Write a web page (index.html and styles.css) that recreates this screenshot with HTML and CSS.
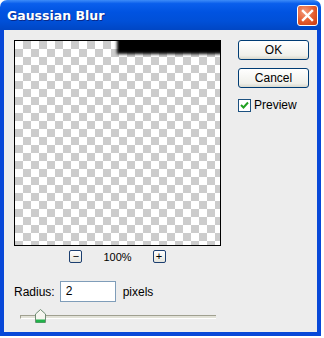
FILE: index.html
```html
<!DOCTYPE html>
<html lang="en">
<head>
    <meta charset="UTF-8">
    <title>Gaussian Blur</title>
    <link rel="stylesheet" href="styles.css">
</head>
<body>
    <div class="window">
        <div class="titlebar">
            <span class="title">Gaussian Blur</span>
            <button class="close" type="button">
                <svg width="13" height="13" viewBox="0 0 13 13">
                    <path d="M2 2 L11 11 M11 2 L2 11" stroke="#fff" stroke-width="2.4" stroke-linecap="square"/>
                </svg>
            </button>
        </div>
        <div class="content">
            <div class="main">
                <div class="left">
                    <div class="preview">
                        <div class="blob"></div>
                    </div>
                    <div class="zoom-row">
                        <span class="zoom-btn">&minus;</span>
                        <span class="zoom-value">100%</span>
                        <span class="zoom-btn">+</span>
                    </div>
                </div>
                <div class="right">
                    <button class="btn" type="button">OK</button>
                    <button class="btn" type="button">Cancel</button>
                    <label class="check">
                        <span class="box">
                            <svg width="9" height="9" viewBox="0 0 9 9">
                                <path d="M1 4 L3.5 6.5 L8 1.5" stroke="#21a121" stroke-width="2" fill="none"/>
                            </svg>
                        </span>
                        Preview
                    </label>
                </div>
            </div>
            <div class="radius-row">
                <span class="label">Radius:</span>
                <span class="input">2</span>
                <span>pixels</span>
            </div>
            <div class="slider">
                <div class="track"></div>
                <svg class="thumb" width="11" height="14" viewBox="0 0 11 14">
                    <path d="M0.5 5 L5.5 0.5 L10.5 5 L10.5 13.5 L0.5 13.5 Z" fill="#f6f6f0" stroke="#6f8c74"/>
                    <rect x="1" y="10.5" width="9" height="3" fill="#21b24a"/>
                </svg>
            </div>
        </div>
    </div>
</body>
</html>
```

FILE: styles.css
```css
body {
    margin: 0;
    background: #fff;
    font-family: "Liberation Sans", Arial, sans-serif;
    font-size: 12px;
    color: #000;
}
.window {
    width: 321px;
    height: 336px;
    display: flex;
    flex-direction: column;
}
.titlebar {
    height: 30px;
    border-radius: 7px 7px 0 0;
    background: linear-gradient(#3d8cf8 0%, #0a5fec 12%, #0053e1 40%, #0050d8 70%, #0046c4 100%);
    display: flex;
    align-items: center;
    justify-content: space-between;
    padding: 0 3px 0 7px;
}
.title {
    color: #fff;
    font-family: "DejaVu Sans", sans-serif;
    font-weight: bold;
    font-size: 12.5px;
    text-shadow: 1px 1px 0 #0a2a8a;
    margin-top: 1px;
}
.close {
    width: 21px;
    height: 21px;
    border: 1px solid #fff;
    border-radius: 3px;
    background: radial-gradient(circle at 35% 30%, #f49a7c, #e35a2c 55%, #c93a10);
    display: flex;
    align-items: center;
    justify-content: center;
    padding: 0;
    margin-top: 1px;
}
.content {
    flex: 1;
    background: #ededed;
    border: 4px solid #0848d8;
    border-top: none;
    padding: 10px 0 0 10px;
    display: flex;
    flex-direction: column;
}
.main {
    display: flex;
    gap: 17px;
}
.left {
    display: flex;
    flex-direction: column;
    align-items: center;
}
.preview {
    width: 205px;
    height: 204px;
    border: 1px solid #000;
    position: relative;
    overflow: hidden;
    background-color: #fff;
    background-image: conic-gradient(#cccccc 25%, #fff 0 50%, #cccccc 0 75%, #fff 0);
    background-size: 16px 16px;
}
.blob {
    position: absolute;
    left: 102px;
    top: -10px;
    width: 120px;
    height: 23px;
    background: #000;
    filter: blur(1.6px);
}
.zoom-row {
    display: flex;
    align-items: center;
    gap: 21px;
    margin-top: 4px;
    font-size: 11px;
}
.zoom-value {
    font-weight: normal;
}
.zoom-btn {
    width: 11px;
    height: 11px;
    border: 1px solid #1c3f70;
    border-radius: 2px;
    background: linear-gradient(#fff, #e4e4dc);
    display: flex;
    align-items: center;
    justify-content: center;
    font-size: 11px;
    line-height: 1;
}
.right {
    display: flex;
    flex-direction: column;
}
.btn {
    width: 71px;
    height: 20px;
    border: 1px solid #003c74;
    border-radius: 3px;
    background: linear-gradient(#ffffff, #f0f0ea 80%, #d8d8cc);
    font-family: "Liberation Sans", Arial, sans-serif;
    font-size: 12px;
    padding: 0;
    margin-bottom: 8px;
}
.check {
    display: flex;
    align-items: center;
    gap: 3px;
    margin-top: 2px;
    font-size: 12px;
}
.box {
    width: 11px;
    height: 11px;
    border: 1px solid #1c5180;
    background: #fff;
    display: flex;
    align-items: center;
    justify-content: center;
}
.radius-row {
    display: flex;
    align-items: center;
    gap: 7px;
    margin-top: 18px;
    font-size: 12px;
}
.label {
    margin-right: -2px;
}
.input {
    width: 49px;
    height: 19px;
    border: 1px solid #7f9db9;
    background: #fff;
    padding-left: 5px;
    line-height: 19px;
}
.slider {
    position: relative;
    width: 196px;
    height: 16px;
    margin: 6px 0 0 6px;
}
.track {
    position: absolute;
    left: 0;
    right: 0;
    top: 7px;
    height: 2px;
    border-top: 1px solid #a0a090;
    border-bottom: 1px solid #fff;
    background: #e2e2d8;
    border-left: 1px solid #a0a090;
}
.thumb {
    position: absolute;
    left: 15px;
    top: 1px;
}
```
